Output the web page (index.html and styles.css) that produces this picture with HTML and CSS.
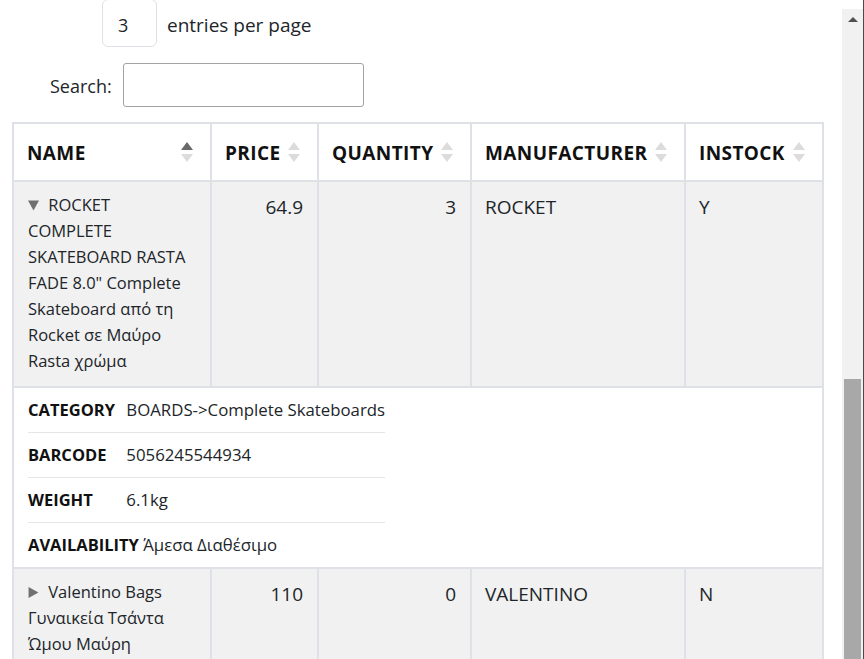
FILE: index.html
```html
<!DOCTYPE html>
<html lang="el">
<head>
<meta charset="utf-8">
<title>Products</title>
<link rel="stylesheet" href="styles.css">
</head>
<body>
<div class="frame">
  <div class="page">
    <div class="length-row">
      <div class="length-box">3</div>
      <span class="length-label">entries per page</span>
    </div>
    <div class="search-row">
      <label class="search-label" for="q">Search:</label>
      <input class="search-input" id="q" type="text">
    </div>
    <table class="data">
      <colgroup>
        <col class="c-name"><col class="c-price"><col class="c-qty"><col class="c-man"><col class="c-stock">
      </colgroup>
      <thead>
        <tr>
          <th><div class="th-in"><span>NAME</span><svg class="sort" viewBox="0 0 12 22"><path class="up active" d="M6 0 L12 8 L0 8 Z"/><path class="down" d="M0 12 L12 12 L6 20 Z"/></svg></div></th>
          <th><div class="th-in"><span>PRICE</span><svg class="sort" viewBox="0 0 12 22"><path class="up" d="M6 0 L12 8 L0 8 Z"/><path class="down" d="M0 12 L12 12 L6 20 Z"/></svg></div></th>
          <th><div class="th-in"><span>QUANTITY</span><svg class="sort" viewBox="0 0 12 22"><path class="up" d="M6 0 L12 8 L0 8 Z"/><path class="down" d="M0 12 L12 12 L6 20 Z"/></svg></div></th>
          <th><div class="th-in"><span>MANUFACTURER</span><svg class="sort" viewBox="0 0 12 22"><path class="up" d="M6 0 L12 8 L0 8 Z"/><path class="down" d="M0 12 L12 12 L6 20 Z"/></svg></div></th>
          <th><div class="th-in"><span>INSTOCK</span><svg class="sort" viewBox="0 0 12 22"><path class="up" d="M6 0 L12 8 L0 8 Z"/><path class="down" d="M0 12 L12 12 L6 20 Z"/></svg></div></th>
        </tr>
      </thead>
      <tbody>
        <tr class="prod">
          <td class="name"><svg class="toggle" viewBox="0 0 10 10"><path d="M0 0.5 L10 0.5 L5 9.5 Z"/></svg> ROCKET COMPLETE SKATEBOARD RASTA FADE 8.0" Complete Skateboard από τη Rocket σε Μαύρο Rasta χρώμα</td>
          <td class="num">64.9</td>
          <td class="num">3</td>
          <td>ROCKET</td>
          <td>Y</td>
        </tr>
        <tr class="detail">
          <td colspan="5">
            <ul class="dl">
              <li><span class="dt">CATEGORY</span> BOARDS-&gt;Complete Skateboards</li>
              <li><span class="dt">BARCODE</span> 5056245544934</li>
              <li><span class="dt">WEIGHT</span> 6.1kg</li>
              <li><span class="dt">AVAILABILITY</span> Άμεσα Διαθέσιμο</li>
            </ul>
          </td>
        </tr>
        <tr class="prod">
          <td class="name"><svg class="toggle" viewBox="0 0 10 10"><path d="M0.5 0 L9.5 5 L0.5 10 Z"/></svg> Valentino Bags Γυναικεία Τσάντα Ώμου Μαύρη</td>
          <td class="num">110</td>
          <td class="num">0</td>
          <td>VALENTINO</td>
          <td>N</td>
        </tr>
      </tbody>
    </table>
  </div>
  <div class="scrollbar">
    <div class="sb-arrow"></div>
    <div class="sb-track"></div>
    <div class="sb-thumb"></div>
  </div>
  <div class="edge"></div>
</div>
</body>
</html>
```
FILE: styles.css
```css
html, body {
  margin: 0;
  padding: 0;
  background: #fff;
}
body {
  font-family: "Open Sans", "Noto Sans", sans-serif;
  font-size: 18px;
  line-height: 26px;
  color: #212529;
}
.frame {
  display: flex;
  width: 864px;
  height: 659px;
  overflow: hidden;
}
.page {
  width: 842px;
  flex: none;
  height: 659px;
  overflow: hidden;
}
.length-row {
  display: flex;
  align-items: center;
  gap: 10px;
  margin: -1px 0 0 102px;
}
.length-box {
  width: 55px;
  height: 48px;
  box-sizing: border-box;
  border: 1px solid #dee2e6;
  border-radius: 6px;
  padding: 4px 0 0 15px;
  display: flex;
  align-items: center;
}
.length-label {
  padding-top: 4px;
  font-size: 19px;
}
.search-row {
  display: flex;
  align-items: center;
  gap: 11px;
  margin: 16px 0 0 50px;
}
.search-label {
  padding-top: 2px;
}
.search-input {
  width: 241px;
  height: 44px;
  box-sizing: border-box;
  border: 1px solid #a3a3a3;
  border-radius: 3px;
  margin: 0;
  font: inherit;
}
.data {
  margin: 15px 0 0 12px;
  border-collapse: collapse;
  width: 810px;
  table-layout: fixed;
  border: 2px solid #dee2e6;
}
.c-name { width: 198px; }
.c-price { width: 107px; }
.c-qty { width: 153px; }
.c-man { width: 214px; }
.c-stock { width: 138px; }
.data th, .data td {
  border: 2px solid #dee2e6;
  text-align: left;
}
.data th {
  padding: 16px 17px 14px 13px;
  font-size: 19px;
  letter-spacing: 0.4px;
  font-weight: 700;
  color: #111;
}
.th-in {
  display: flex;
  align-items: center;
  justify-content: space-between;
  gap: 6px;
}
.sort {
  width: 12px;
  height: 22px;
  flex: none;
}
.sort path { fill: #dcdcdc; }
.sort path.active { fill: #6a6a6a; }
.prod td {
  background: #f1f1f1;
  padding: 12px 14px 12px 13px;
  vertical-align: top;
  font-size: 19px;
}
.prod td.num { text-align: right; }
.prod td.name {
  font-size: 16.5px;
  padding-top: 10px;
  padding-left: 14px;
}
.toggle {
  width: 11px;
  height: 11px;
  fill: #707070;
  margin-right: 5px;
}
.detail td {
  background: #fff;
  padding: 0 14px 0 14px;
  font-size: 16.8px;
}
.dl {
  list-style: none;
  margin: 0;
  padding: 0;
  display: inline-block;
  vertical-align: top;
}
.dl li {
  padding: 9px 0;
  border-bottom: 1px solid #e4e6e8;
}
.dl li:last-child { border-bottom: none; }
.dt {
  display: inline-block;
  min-width: 94px;
  font-size: 16.5px;
  font-weight: 700;
  color: #111;
}
.scrollbar {
  width: 21px;
  flex: none;
  display: flex;
  flex-direction: column;
  margin-top: 9px;
  background: #f1f1f1;
}
.sb-arrow {
  height: 20px;
  display: flex;
  justify-content: center;
  align-items: center;
}
.sb-arrow::before {
  content: "";
  border-left: 5px solid transparent;
  border-right: 5px solid transparent;
  border-bottom: 5px solid #505050;
}
.sb-track {
  height: 350px;
}
.sb-thumb {
  flex: 1;
  margin: 0 2px;
  background: #a8a8a8;
}
.edge {
  width: 1px;
  flex: none;
  background: #4a4a4a;
}
```
